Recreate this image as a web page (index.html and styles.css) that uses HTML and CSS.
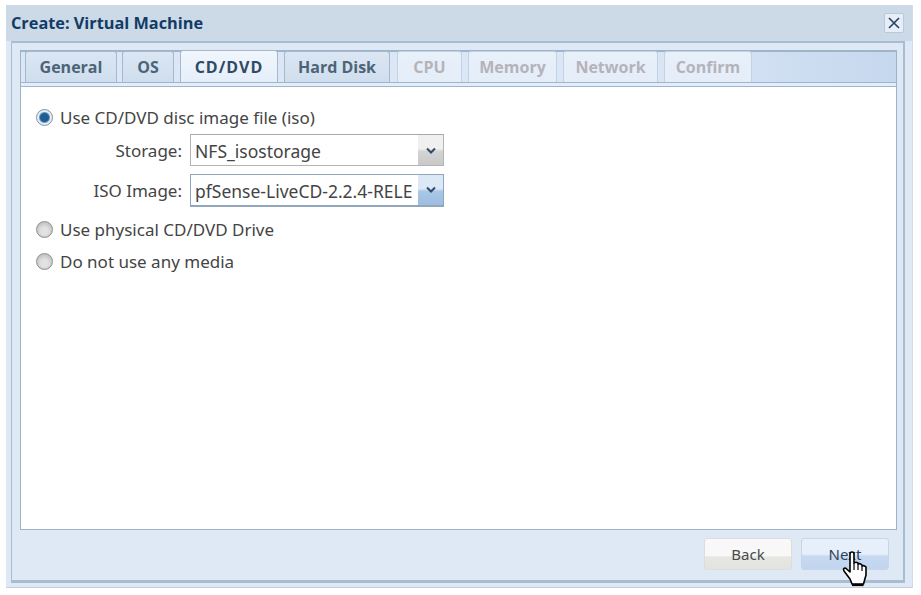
FILE: index.html
```html
<!DOCTYPE html>
<html lang="en">
<head>
    <meta charset="UTF-8">
    <meta name="viewport" content="width=device-width, initial-scale=1.0">
    <title>Create: Virtual Machine</title>
    <link rel="stylesheet" href="styles.css">
</head>
<body>
    <div class="window">
        <div class="win-head">
            <span class="win-title">Create: Virtual Machine</span>
            <span class="win-close">
                <svg width="12" height="12" viewBox="0 0 12 12"><path d="M1 1 11 11M11 1 1 11" stroke="#2c4560" stroke-width="1.700" fill="none"/></svg>
            </span>
        </div>
        <div class="win-body">
            <div class="panel">
                <div class="tabs">
                    <div class="tab tab-general">General</div>
                    <div class="tab tab-os">OS</div>
                    <div class="tab tab-cd active">CD/DVD</div>
                    <div class="tab tab-hd">Hard Disk</div>
                    <div class="tab tab-cpu off">CPU</div>
                    <div class="tab tab-mem off">Memory</div>
                    <div class="tab tab-net off">Network</div>
                    <div class="tab tab-conf off">Confirm</div>
                </div>
                <div class="panel-content">
                    <div class="radio-row first">
                        <span class="radio checked"></span>
                        <span>Use CD/DVD disc image file (iso)</span>
                    </div>
                    <div class="field">
                        <label>Storage:</label>
                        <div class="combo">
                            <span class="combo-text">NFS_isostorage</span>
                            <span class="combo-btn">
                                <svg width="10" height="7" viewBox="0 0 10 7"><path d="M1 1.500 5 5.500 9 1.500" stroke="#2f4a66" stroke-width="2" fill="none"/></svg>
                            </span>
                        </div>
                    </div>
                    <div class="field">
                        <label>ISO Image:</label>
                        <div class="combo hot">
                            <span class="combo-text">pfSense-LiveCD-2.2.4-RELE</span>
                            <span class="combo-btn">
                                <svg width="10" height="7" viewBox="0 0 10 7"><path d="M1 1.500 5 5.500 9 1.500" stroke="#2f4a66" stroke-width="2" fill="none"/></svg>
                            </span>
                        </div>
                    </div>
                    <div class="radio-row second">
                        <span class="radio"></span>
                        <span>Use physical CD/DVD Drive</span>
                    </div>
                    <div class="radio-row third">
                        <span class="radio"></span>
                        <span>Do not use any media</span>
                    </div>
                </div>
            </div>
            <div class="win-foot">
                <div class="btn">Back</div>
                <div class="btn btn-over">Next</div>
            </div>
        </div>
    </div>
    <!-- mouse pointer over the Next button -->
    <svg class="pointer" width="26" height="36" viewBox="0 0 26 36">
        <path d="M8 3Q8 1 10 1Q12 1 12 3V12Q14 10.500 16 12V13Q18 12 20 14V15Q22 14 24 16V24L21.500 33H10L8 28L2 20Q0.500 17 3.500 17L8 21Z" fill="#fff" stroke="#000" stroke-width="1.600" stroke-linejoin="round"/>
        <path d="M12 12V19M16 13V19M20 15V20" stroke="#000" stroke-width="1.200" fill="none"/>
        <path d="M10 34H21.500" stroke="#000" stroke-width="2.200"/>
    </svg>
</body>
</html>
```

FILE: styles.css
```css
body {
    margin: 0;
    width: 921px;
    height: 595px;
    overflow: hidden;
    background-color: #fff;
    font-family: "Noto Sans", sans-serif;
    font-size: 17px;
    color: #444;
    position: relative;
}

.window {
    box-sizing: border-box;
    margin: 5px 0 0 6px;
    width: 907px;
    height: 583px;
    display: flex;
    flex-direction: column;
    background-color: #dfe9f6;
    border-right: 1px solid #d3dbe5;
    border-bottom: 1px solid #c5ced9;
}

.win-head {
    height: 36px;
    flex: none;
    display: flex;
    align-items: center;
    justify-content: space-between;
    background-color: #ccd9e7;
    padding: 0 8px 0 5px;
}
.win-title {
    font-family: "Open Sans", sans-serif;
    font-weight: 700;
    font-size: 16.300px;
    color: #123c66;
}
.win-close {
    width: 18px;
    height: 18px;
    display: flex;
    align-items: center;
    justify-content: center;
    background-color: #e6eef7;
    border: 1px solid #b9c9da;
    border-radius: 2px;
}

.win-body {
    flex: 1;
    display: flex;
    flex-direction: column;
    margin: 0 7px 4px 5px;
    padding: 7px 6px 0 8px;
    background-color: #dfe9f6;
    border: 1px solid #a9bdd2;
    border-width: 2px 2px 3px 1px;
    min-height: 0;
}

.panel {
    flex: 1;
    display: flex;
    flex-direction: column;
    min-height: 0;
    border: 1px solid #9db4cb;
    border-top-width: 2px;
}

.tabs {
    height: 35px;
    flex: none;
    box-sizing: border-box;
    display: flex;
    align-items: flex-end;
    padding: 0 0 0 4px;
    background: linear-gradient(to right, #dbe7f6 0%, #dbe7f6 70%, #c6d8ee 100%);
    border-bottom: 1px solid #9db4cb;
    box-shadow: inset 0 -3px 0 #e4eefa, inset 0 -4px 0 #9db4cb;
}
.tab {
    box-sizing: border-box;
    height: 31px;
    margin-bottom: 4px;
    margin-right: 6px;
    display: flex;
    align-items: center;
    justify-content: center;
    font-family: "Open Sans", sans-serif;
    font-weight: 700;
    font-size: 16px;
    color: #4d6478;
    background: linear-gradient(to bottom, #dbe6f3, #cfdeee);
    border: 1px solid #a6b8ca;
    border-bottom: none;
    border-radius: 3px 3px 0 0;
}
.tab.active {
    height: 32px;
    background: linear-gradient(to bottom, #f1f6fc, #e4eefa);
    color: #2f4a62;
    letter-spacing: 1px;
}
.tab.off {
    color: #b5b3ba;
    background: linear-gradient(to bottom, #e8f0fa, #e4edf8);
    border-color: #c3d2e2;
}
.tab-general { width: 92px; margin-right: 5px; }
.tab-os { width: 52px; }
.tab-cd { width: 98px; }
.tab-hd { width: 106px; margin-right: 7px; }
.tab-cpu { width: 65px; }
.tab-mem { width: 89px; }
.tab-net { width: 95px; }
.tab-conf { width: 88px; margin-right: 0; }

.panel-content {
    flex: 1;
    background-color: #fff;
    padding: 19px 0 0 15px;
}

.radio-row {
    display: flex;
    align-items: center;
    gap: 7px;
    height: 22px;
}
.radio-row.second { margin-top: 12px; }
.radio-row.third { margin-top: 10px; }
.radio {
    box-sizing: border-box;
    width: 17px;
    height: 17px;
    border-radius: 50%;
    border: 1px solid #8f8f8f;
    background: radial-gradient(circle at 50% 60%, #e2e2e2 30%, #bdbdbd 80%);
}
.radio.checked {
    border-color: #7f93a8;
    background: radial-gradient(circle, #1f5e92 0 4px, #6f99bf 5px, #e6edf4 6px);
}

.field {
    display: flex;
    align-items: center;
    height: 32px;
    margin-top: 6px;
}
.field + .field { margin-top: 8px; }
.field label {
    width: 146px;
    margin-right: 8px;
    text-align: right;
}
.combo {
    box-sizing: border-box;
    width: 254px;
    height: 32px;
    display: flex;
    background-color: #fff;
    border: 1px solid #b4b4b4;
    border-top-color: #a8a8a8;
}
.combo-text {
    flex: 1;
    padding-left: 4px;
    font-size: 17.500px;
    line-height: 32px;
    white-space: nowrap;
    overflow: hidden;
}
.combo-btn {
    width: 25px;
    flex: none;
    display: flex;
    align-items: center;
    justify-content: center;
    background: linear-gradient(to bottom, #f0f0f0 0 45%, #d4d4d4 55%, #c8c8c8);
}
.combo.hot {
    height: 33px;
    border-color: #8fa6bd;
    border-bottom-width: 2px;
}
.combo.hot .combo-btn {
    background: linear-gradient(to bottom, #dbe8f6 0 45%, #a9c6e6 55%, #9dbde0);
}

.win-foot {
    flex: none;
    height: 50px;
    display: flex;
    justify-content: flex-end;
    gap: 9px;
    padding: 8px 8px 0 0;
    box-sizing: border-box;
}
.btn {
    box-sizing: border-box;
    width: 88px;
    height: 32px;
    display: flex;
    align-items: center;
    justify-content: center;
    font-size: 15px;
    color: #4a4a4a;
    background: linear-gradient(to bottom, #f8f8f8 0 55%, #e6e6e3 60%, #e3e3e0);
    border: 1px solid #dcdcdc;
    border-radius: 3px;
}
.btn-over {
    color: #2d4257;
    background: linear-gradient(to bottom, #e6effa 0 50%, #c7d9f0 58%, #c1d5ee);
    border-color: #c6d6e8;
}

.pointer {
    position: absolute;
    left: 842px;
    top: 551px;
}
```
